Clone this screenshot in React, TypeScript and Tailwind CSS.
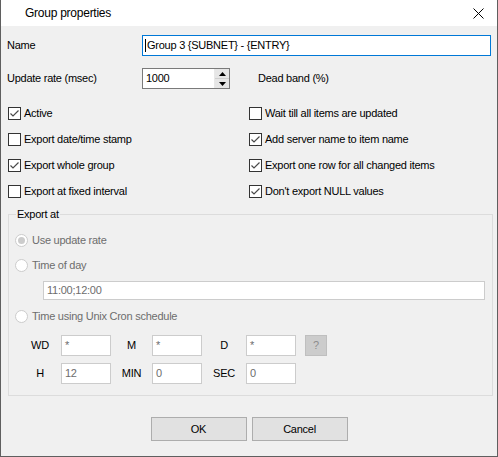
import React from "react";

const font = { fontFamily: '"Liberation Sans", Arial, sans-serif', letterSpacing: "-0.25px" };

function CheckBox({ label, checked }: { label: string; checked?: boolean }) {
  return (
    <div className="flex items-center h-[26px]">
      <span className="w-[13px] h-[13px] border border-[#333333] bg-white flex items-center justify-center">
        {checked && (
          <svg width="11" height="11" viewBox="0 0 11 11">
            <path d="M1.5 5.5 L4 8 L9.5 2.5" fill="none" stroke="#4a4a4a" strokeWidth="1.2" />
          </svg>
        )}
      </span>
      <span className="ml-[3px] text-[11px] text-black">{label}</span>
    </div>
  );
}

function Radio({ label, checked }: { label: string; checked?: boolean }) {
  return (
    <div className="flex items-center h-[20px] pl-[6px]">
      <span className="w-[13px] h-[13px] rounded-full border border-[#cccccc] bg-white flex items-center justify-center">
        {checked && <span className="w-[7px] h-[7px] rounded-full bg-[#cccccc]" />}
      </span>
      <span className="ml-[4px] text-[11px] text-[#6d6d6d]">{label}</span>
    </div>
  );
}

function CronBox({ value }: { value: string }) {
  return (
    <div className="w-[50px] h-[21px] border border-[#cccccc] bg-white pl-[3px] flex items-center text-[11px] text-[#6d6d6d]">
      {value}
    </div>
  );
}

function CronLabel({ text, w }: { text: string; w: string }) {
  return <div className={`${w} text-center text-[11px] text-black`}>{text}</div>;
}

export default function App() {
  return (
    <div style={font} className="w-[498px] h-[457px] bg-[#f0f0f0] border-l border-r border-b border-[#5f5f5f] flex flex-col select-none">
      {/* title bar */}
      <div className="h-[26px] bg-white flex items-center justify-between pl-[24px] pr-[13px]">
        <span className="text-[12px] text-black">Group properties</span>
        <svg width="11" height="11" viewBox="0 0 11 11">
          <path d="M0.5 0.5 L10.5 10.5 M10.5 0.5 L0.5 10.5" stroke="#000" strokeWidth="1" />
        </svg>
      </div>

      <div className="px-[6px]">
        {/* name */}
        <div className="flex items-center mt-[9px] h-[21px]">
          <span className="w-[135px] text-[11px]">Name</span>
          <div className="w-[349px] h-[21px] border border-[#0078d7] bg-white flex items-center pl-[2px] text-[11px]">
            <span className="w-px h-[13px] bg-black" />
            <span className="ml-[1px]">Group 3 {"{SUBNET}"} - {"{ENTRY}"}</span>
          </div>
        </div>

        {/* update rate */}
        <div className="flex items-center mt-[12px] h-[21px]">
          <span className="w-[135px] text-[11px]">Update rate (msec)</span>
          <div className="w-[88px] h-[21px] border border-[#7a7a7a] bg-white flex items-center pl-[3px] text-[11px]">
            <span className="flex-1">1000</span>
            <div className="w-[15px] h-full flex flex-col border-l border-[#e8e8e8]">
              <div className="flex-1 bg-[#e6e6e6] border-b border-[#cfcfcf] flex items-center justify-center">
                <svg width="7" height="4" viewBox="0 0 7 4"><path d="M3.5 0 L7 4 L0 4 Z" fill="#000" /></svg>
              </div>
              <div className="flex-1 bg-[#e6e6e6] flex items-center justify-center">
                <svg width="7" height="4" viewBox="0 0 7 4"><path d="M0 0 L7 0 L3.5 4 Z" fill="#000" /></svg>
              </div>
            </div>
          </div>
          <span className="ml-[28px] text-[11px]">Dead band (%)</span>
        </div>

        {/* checkboxes */}
        <div className="grid grid-cols-[241px_1fr] mt-[11px] pl-[1px]">
          <CheckBox label="Active" checked />
          <CheckBox label="Wait till all items are updated" />
          <CheckBox label="Export date/time stamp" />
          <CheckBox label="Add server name to item name" checked />
          <CheckBox label="Export whole group" checked />
          <CheckBox label="Export one row for all changed items" checked />
          <CheckBox label="Export at fixed interval" />
          <CheckBox label="Don't export NULL values" checked />
        </div>

        {/* export at group */}
        <div className="relative mt-[10px] ml-[1px] w-[485px] border border-[#dcdcdc] pt-[15px] pb-[11px]">
          <span className="absolute left-[7px] top-[-8px] px-[1px] bg-[#f0f0f0] text-[11px] leading-[14px]">Export at</span>
          <Radio label="Use update rate" checked />
          <div className="mt-[5px]">
            <Radio label="Time of day" />
          </div>
          <div className="mt-[6px] ml-[34px] mr-[7px] h-[19px] border border-[#cccccc] bg-white flex items-center pl-[3px] text-[11px] text-[#6d6d6d]">
            11:00;12:00
          </div>
          <div className="mt-[6px]">
            <Radio label="Time using Unix Cron schedule" />
          </div>
          <div className="flex items-center mt-[9px] ml-[10px]">
            <CronLabel text="WD" w="w-[42px]" />
            <CronBox value="*" />
            <CronLabel text="M" w="w-[41px]" />
            <CronBox value="*" />
            <CronLabel text="D" w="w-[44px]" />
            <CronBox value="*" />
            <div className="ml-[9px] w-[22px] h-[21px] bg-[#cccccc] border border-[#bfbfbf] flex items-center justify-center text-[11px] text-[#8d8d8d]">
              ?
            </div>
          </div>
          <div className="flex items-center mt-[7px] ml-[10px]">
            <CronLabel text="H" w="w-[42px]" />
            <CronBox value="12" />
            <CronLabel text="MIN" w="w-[41px]" />
            <CronBox value="0" />
            <CronLabel text="SEC" w="w-[44px]" />
            <CronBox value="0" />
          </div>
        </div>

        {/* buttons */}
        <div className="flex justify-center gap-[5px] mt-[21px]">
          <button className="w-[96px] h-[24px] bg-[#e1e1e1] border border-[#adadad] text-[11px]">OK</button>
          <button className="w-[96px] h-[24px] bg-[#e1e1e1] border border-[#adadad] text-[11px]">Cancel</button>
        </div>
      </div>
    </div>
  );
}
